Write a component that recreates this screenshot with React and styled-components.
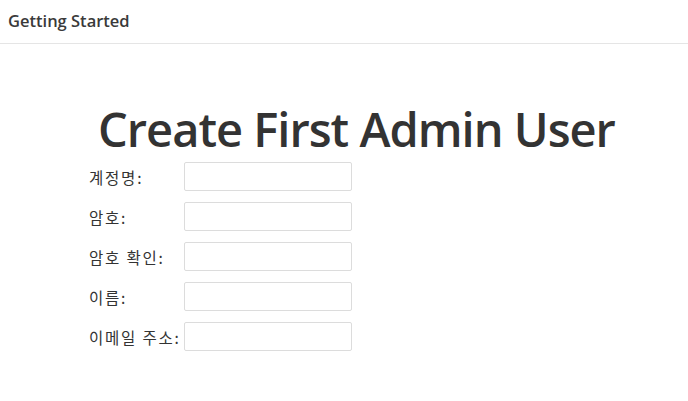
import React from "react";
import styled, { createGlobalStyle } from "styled-components";

const Global = createGlobalStyle`
  html, body { margin: 0; padding: 0; background: #fff; }
  body { font-family: "Open Sans", "Noto Sans CJK KR", sans-serif; color: #333; }
`;

const Header = styled.header`
  height: 44px;
  border-bottom: 1px solid #e5e5e5;
  display: flex;
  align-items: center;
  padding: 0 8px 2px;
  box-sizing: border-box;
  font-size: 16.5px;
  font-weight: 600;
  color: #3a3a3a;
`;

const Main = styled.main`
  padding: 57px 0 0 89px;
`;

const Title = styled.h1`
  margin: 0 0 0 9px;
  font-size: 47px;
  font-weight: 600;
  line-height: 56px;
  color: #333;
  letter-spacing: -1px;
`;

const Form = styled.form`
  display: flex;
  flex-direction: column;
  gap: 11px;
  margin-top: 5px;
`;

const Row = styled.div`
  display: flex;
  align-items: center;
`;

const Label = styled.label`
  width: 95px;
  font-size: 15.5px;
  letter-spacing: 1.8px;
  font-family: "Noto Sans CJK KR", sans-serif;
  color: #333;
  white-space: nowrap;
`;

const Input = styled.input`
  width: 168px;
  height: 29px;
  box-sizing: border-box;
  border: 1px solid #dcdcdc;
  border-radius: 2px;
  padding: 0 6px;
  font-size: 13px;
  outline: none;
`;

const fields = ["계정명:", "암호:", "암호 확인:", "이름:", "이메일 주소:"];

export default function App() {
  return (
    <>
      <Global />
      <Header>Getting Started</Header>
      <Main>
        <Title>Create First Admin User</Title>
        <Form>
          {fields.map((f) => (
            <Row key={f}>
              <Label>{f}</Label>
              <Input type={f.startsWith("암호") ? "password" : "text"} />
            </Row>
          ))}
        </Form>
      </Main>
    </>
  );
}
